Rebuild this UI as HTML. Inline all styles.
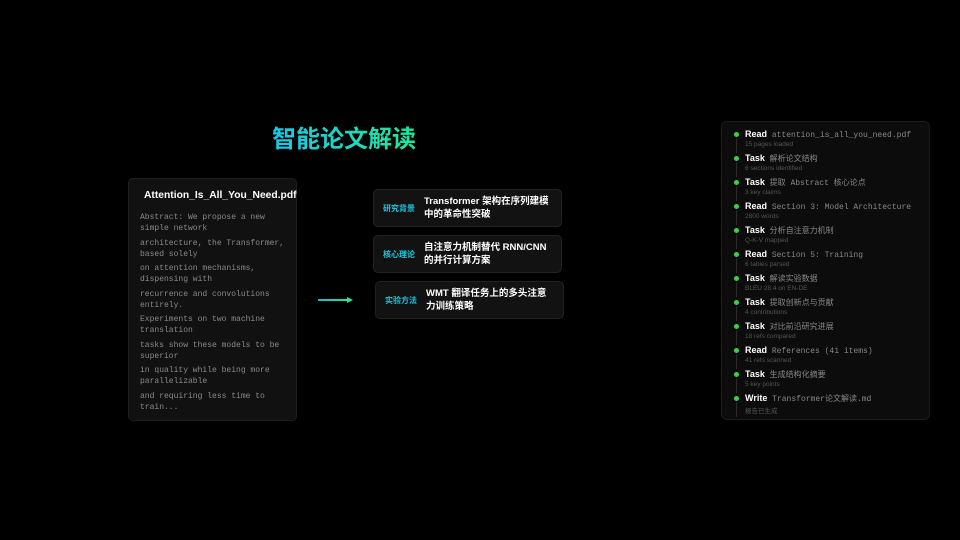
<!DOCTYPE html><html><head><meta charset="utf-8"><style>
body{margin:0;width:960px;height:540px;background:#000;position:relative;overflow:hidden;font-family:"Liberation Sans","Noto Sans CJK SC",sans-serif}
.t{position:absolute;left:272px;top:119px;font-size:24px;font-weight:bold;background:linear-gradient(90deg,#19c8e8,#1ee89a);-webkit-background-clip:text;color:transparent}
.card{position:absolute;left:128px;top:178px;width:169px;height:243px;background:#111;border:1px solid #1f1f1f;border-radius:5px;box-sizing:border-box}
.card h3{position:absolute;left:15px;top:11px;margin:0;font-size:10.3px;color:#fff;white-space:nowrap}
.abs{position:absolute;left:11px;top:33px;font-family:"Liberation Mono",monospace;font-size:8px;color:#8a8a8a;line-height:11px}
.abs div{margin-bottom:3.5px}
.m{position:absolute;width:189px;height:38px;background:#121212;border:1px solid #222;border-radius:5px;box-sizing:border-box}
.m b{position:absolute;left:9px;top:13px;font-size:8px;color:#1ac8e0}
.m span{position:absolute;left:50px;top:5px;font-size:9.5px;font-weight:bold;color:#fff;line-height:13px;white-space:nowrap}
.ar{position:absolute;left:318px;top:299px;width:30px;height:1.5px;background:linear-gradient(90deg,#1ab8d0,#1ee89a)}
.ah{position:absolute;left:347px;top:297px;border-left:6px solid #1ee89a;border-top:3px solid transparent;border-bottom:3px solid transparent}
.p{position:absolute;left:721px;top:121px;width:209px;height:299px;background:#0c0c0c;border:1px solid #1c1c1c;border-radius:6px;box-sizing:border-box}
.it{position:absolute;left:23px;white-space:nowrap}
.it .a{font-family:"Liberation Mono","Noto Sans CJK SC",monospace;font-size:8px;color:#888}
.it .a strong{color:#fff;font-family:"Liberation Sans",sans-serif;font-size:9px}
.it .s{font-size:6.5px;color:#555;margin-top:1px}
.d{position:absolute;left:12px;width:5px;height:5px;border-radius:50%;background:#3ccf4e}
.l{position:absolute;left:14px;width:1px;height:15px;background:#2a2a2a}
</style></head><body>
<div class="t">智能论文解读</div>
<div class="card"><h3>Attention_Is_All_You_Need.pdf</h3>
<div class="abs"><div>Abstract: We propose a new<br>simple network</div><div>architecture, the Transformer,<br>based solely</div><div>on attention mechanisms,<br>dispensing with</div><div>recurrence and convolutions<br>entirely.</div><div>Experiments on two machine<br>translation</div><div>tasks show these models to be<br>superior</div><div>in quality while being more<br>parallelizable</div><div>and requiring less time to<br>train...</div></div></div>
<div class="ar"></div><div class="ah"></div>
<div class="m" style="left:373px;top:189px"><b>研究背景</b><span>Transformer 架构在序列建模<br>中的革命性突破</span></div>
<div class="m" style="left:373px;top:235px"><b>核心理论</b><span>自注意力机制替代 RNN/CNN<br>的并行计算方案</span></div>
<div class="m" style="left:375px;top:281px"><b>实验方法</b><span>WMT 翻译任务上的多头注意<br>力训练策略</span></div>
<div class="p">
<div class="d" style="top:10px"></div><div class="l" style="top:16px"></div><div class="it" style="top:7px"><div class="a"><strong>Read</strong> attention_is_all_you_need.pdf</div><div class="s">15 pages loaded</div></div>
<div class="d" style="top:34px"></div><div class="l" style="top:40px"></div><div class="it" style="top:31px"><div class="a"><strong>Task</strong> 解析论文结构</div><div class="s">6 sections identified</div></div>
<div class="d" style="top:58px"></div><div class="l" style="top:64px"></div><div class="it" style="top:55px"><div class="a"><strong>Task</strong> 提取 Abstract 核心论点</div><div class="s">3 key claims</div></div>
<div class="d" style="top:82px"></div><div class="l" style="top:88px"></div><div class="it" style="top:79px"><div class="a"><strong>Read</strong> Section 3: Model Architecture</div><div class="s">2800 words</div></div>
<div class="d" style="top:106px"></div><div class="l" style="top:112px"></div><div class="it" style="top:103px"><div class="a"><strong>Task</strong> 分析自注意力机制</div><div class="s">Q-K-V mapped</div></div>
<div class="d" style="top:130px"></div><div class="l" style="top:136px"></div><div class="it" style="top:127px"><div class="a"><strong>Read</strong> Section 5: Training</div><div class="s">6 tables parsed</div></div>
<div class="d" style="top:154px"></div><div class="l" style="top:160px"></div><div class="it" style="top:151px"><div class="a"><strong>Task</strong> 解读实验数据</div><div class="s">BLEU 28.4 on EN-DE</div></div>
<div class="d" style="top:178px"></div><div class="l" style="top:184px"></div><div class="it" style="top:175px"><div class="a"><strong>Task</strong> 提取创新点与贡献</div><div class="s">4 contributions</div></div>
<div class="d" style="top:202px"></div><div class="l" style="top:208px"></div><div class="it" style="top:199px"><div class="a"><strong>Task</strong> 对比前沿研究进展</div><div class="s">18 refs compared</div></div>
<div class="d" style="top:226px"></div><div class="l" style="top:232px"></div><div class="it" style="top:223px"><div class="a"><strong>Read</strong> References (41 items)</div><div class="s">41 refs scanned</div></div>
<div class="d" style="top:250px"></div><div class="l" style="top:256px"></div><div class="it" style="top:247px"><div class="a"><strong>Task</strong> 生成结构化摘要</div><div class="s">5 key points</div></div>
<div class="d" style="top:274px"></div><div class="l" style="top:280px"></div><div class="it" style="top:271px"><div class="a"><strong>Write</strong> Transformer论文解读.md</div><div class="s">报告已生成</div></div>
</div>
</body></html>
